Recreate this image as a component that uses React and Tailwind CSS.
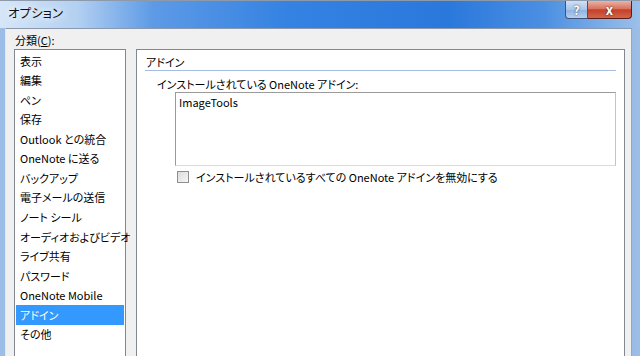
const categories = [
  "表示",
  "編集",
  "ペン",
  "保存",
  "Outlook との統合",
  "OneNote に送る",
  "バックアップ",
  "電子メールの送信",
  "ノート シール",
  "オーディオおよびビデオ",
  "ライブ共有",
  "パスワード",
  "OneNote Mobile",
  "アドイン",
  "その他",
];

const SELECTED = "アドイン";

function TitleButtons() {
  return (
    <div className="flex items-start pr-[8px]">
      <div className="flex h-[18px] w-[23px] items-center justify-center rounded-bl-[4px] border border-t-0 border-[#3d5378] bg-[linear-gradient(#cfe0f4,#a9c5ea_50%,#8db1e0_51%,#b5cff0)] text-[12px] font-bold leading-none text-white [text-shadow:0_0_2px_#334]">
        ?
      </div>
      <div className="flex h-[18px] w-[44px] items-center justify-center rounded-br-[4px] border border-l-0 border-t-0 border-[#5a1e16] bg-[linear-gradient(#eab3a6,#d8735f_45%,#c4402a_52%,#d2654a)] text-[13px] font-bold leading-none text-white [text-shadow:0_0_2px_#411]">
        x
      </div>
    </div>
  );
}

export default function App() {
  return (
    <div
      className="flex h-[356px] w-[640px] flex-col overflow-hidden bg-[linear-gradient(90deg,#9cbde6,#7fa9dd_40%,#6d9bd8_70%,#9bbde6)] text-[11px] text-black [font-feature-settings:'palt']"
      style={{ fontFamily: '"Noto Sans CJK JP", "Liberation Sans", sans-serif' }}
    >
      {/* title bar */}
      <div className="flex h-[28px] shrink-0 items-start justify-between border-t border-[#8d9aab] bg-[linear-gradient(90deg,#d6e6f7,#b3d0f1_12%,#5d9ae6_24%,#3482e2_45%,#2a78dc_70%,#4b8fe2_85%,#9cc0ea)]">
        <div className="pl-[8px] pt-[3px] text-[12.5px] leading-[18px] text-[#111] [text-shadow:0_0_6px_#fff,0_0_10px_#fff]">
          オプション
        </div>
        <TitleButtons />
      </div>

      {/* window body */}
      <div className="flex min-h-0 flex-1 pl-[5px] pr-[8px]">
        <div className="flex min-h-0 flex-1 flex-col border-l border-t border-r border-l-[#dfe8f4] border-t-[#8a99ad] border-r-[#9aa6b5] bg-[#f0f0f0] pl-[8px] pr-[6px]">
          <div className="pl-[1px] pt-[3px] leading-[16px]">
            分類(<span className="underline">C</span>):
          </div>

          <div className="mt-[1px] flex min-h-0 flex-1 gap-[10px]">
            {/* category list */}
            <div className="w-[112px] shrink-0 border border-b-0 border-[#828790] bg-white pt-[1px]">
              {categories.map((c) => (
                <div
                  key={c}
                  className={
                    c === SELECTED
                      ? "mx-[1px] flex h-[19.57px] items-center whitespace-nowrap bg-[#3399ff] pl-[4px] text-white"
                      : "mx-[1px] flex h-[19.57px] items-center whitespace-nowrap pl-[4px]"
                  }
                >
                  {c}
                </div>
              ))}
            </div>

            {/* add-in panel */}
            <div className="flex flex-1 flex-col border border-b-0 border-[#828790] bg-white pt-[4px]">
              <div className="ml-[8px] mr-[8px] border-b border-[#a6bde3] pl-[1px] leading-[16px]">
                アドイン
              </div>
              <div className="pl-[20px] pt-[5px] leading-[16px]">
                インストールされている OneNote アドイン:
              </div>
              <div className="ml-[38px] mr-[8px] h-[74px] border border-[#9b9b9b] border-b-[#dadada] border-r-[#c4c4c4] bg-white pl-[3px] pt-[1px] leading-[16px]">
                ImageTools
              </div>
              <div className="ml-[40px] mt-[3px] flex h-[16px] items-center gap-[7px]">
                <div className="h-[12px] w-[12px] border border-[#8e8f8f] bg-[linear-gradient(135deg,#dcdcdc,#f6f6f6)]" />
                <div className="leading-[16px]">
                  インストールされているすべての OneNote アドインを無効にする
                </div>
              </div>
            </div>
          </div>
        </div>
      </div>
    </div>
  );
}
